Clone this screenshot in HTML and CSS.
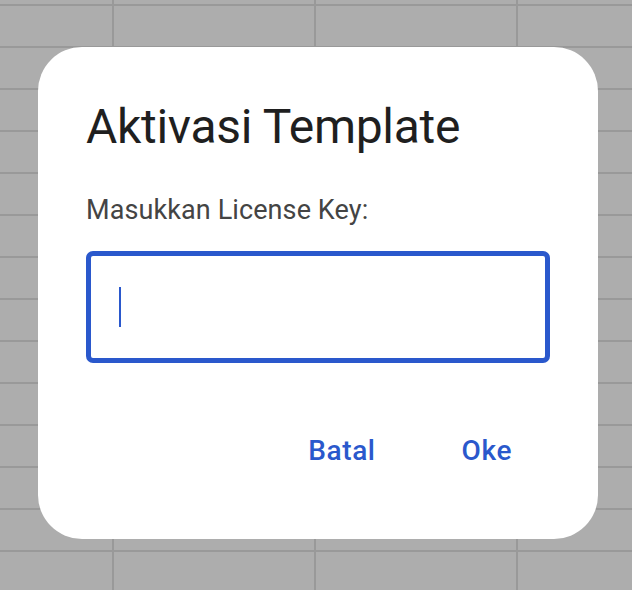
FILE: index.html
```html
<!DOCTYPE html>
<html lang="id">
<head>
<meta charset="utf-8">
<title>Aktivasi Template</title>
<link rel="stylesheet" href="styles.css">
</head>
<body>
  <div class="dialog">
    <h1 class="title">Aktivasi Template</h1>
    <p class="label">Masukkan License Key:</p>
    <div class="field"><span class="caret"></span></div>
    <div class="actions">
      <button class="btn">Batal</button>
      <button class="btn">Oke</button>
    </div>
  </div>
</body>
</html>
```

FILE: styles.css
```css
html, body {
  margin: 0;
  height: 100%;
}
body {
  box-sizing: border-box;
  width: 632px;
  height: 590px;
  padding: 0 0 4px 4px;
  display: flex;
  align-items: center;
  justify-content: center;
  background-color: #adadad;
  background-image:
    linear-gradient(to right, #999999 2px, transparent 2px),
    linear-gradient(to bottom, #999999 2px, transparent 2px);
  background-size: 202px 42px, 202px 42px;
  background-position: 112px 0, 0 4px;
  font-family: Roboto, "Liberation Sans", sans-serif;
  overflow: hidden;
}
.dialog {
  box-sizing: border-box;
  width: 560px;
  height: 492px;
  background: #ffffff;
  border-radius: 44px;
  padding: 52px 48px 0 48px;
  display: flex;
  flex-direction: column;
}
.title {
  margin: 0;
  font-size: 48px;
  line-height: 56px;
  font-weight: 400;
  letter-spacing: -0.3px;
  color: #1f1f1f;
}
.label {
  margin: 39px 0 0 0;
  font-size: 27px;
  line-height: 32px;
  font-weight: 400;
  letter-spacing: 0.1px;
  color: #444444;
}
.field {
  box-sizing: border-box;
  margin-top: 25px;
  height: 112px;
  border: 5px solid #2a58cc;
  border-radius: 7px;
  padding-left: 28px;
  display: flex;
  align-items: center;
}
.caret {
  width: 2px;
  height: 40px;
  background: #2a58cc;
}
.actions {
  margin-top: 64px;
  display: flex;
  justify-content: flex-end;
  gap: 10px;
}
.btn {
  border: 0;
  background: transparent;
  padding: 8px 38px;
  font-family: Roboto, "Liberation Sans", sans-serif;
  font-size: 28px;
  line-height: 32px;
  font-weight: 500;
  letter-spacing: 0.6px;
  color: #2a58cc;
  cursor: pointer;
}
```
